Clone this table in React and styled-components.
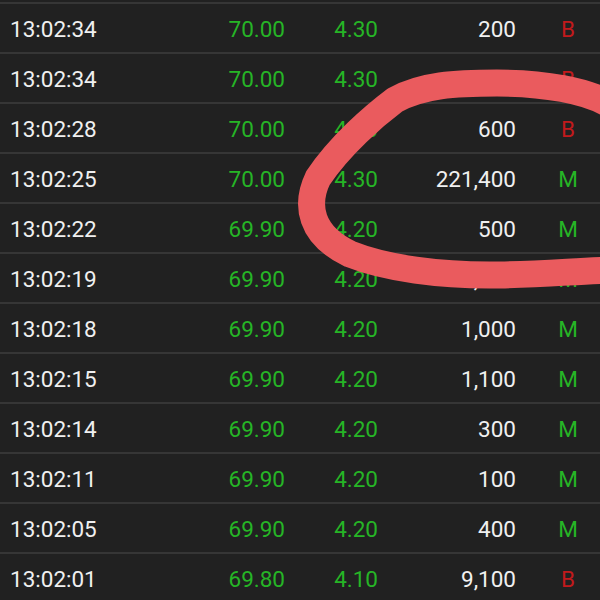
import styled, { createGlobalStyle } from "styled-components";

const GlobalStyle = createGlobalStyle`
  html, body {
    margin: 0;
    padding: 0;
    background: #212121;
    overflow: hidden;
  }
`;

const Screen = styled.div`
  position: relative;
  width: 600px;
  height: 600px;
  padding-top: 2px;
  box-sizing: border-box;
  background: #212121;
  overflow: hidden;
  font-family: Roboto, "Noto Sans", sans-serif;
`;

const Row = styled.div`
  display: grid;
  grid-template-columns: 190px 85px 93px 138px 84px;
  align-items: center;
  height: 46px;
  padding: 2px 0 0 10px;
  border-top: 2px solid #363636;
  font-size: 22.5px;
  line-height: 46px;
  white-space: nowrap;
`;

const Time = styled.span`
  color: #f0f0f0;
`;

const Num = styled.span`
  color: ${(p) => p.color || "#f0f0f0"};
  text-align: right;
`;

const Side = styled.span`
  color: ${(p) => (p.side === "B" ? "#c21a1c" : "#26b526")};
  text-align: center;
  padding-left: 20px;
`;

const Scribble = styled.svg`
  position: absolute;
  left: 0;
  top: 0;
  pointer-events: none;
`;

const GREEN = "#26b526";

const trades = [
  ["13:02:34", "70.00", "4.30", "200", "B"],
  ["13:02:34", "70.00", "4.30", "100", "B"],
  ["13:02:28", "70.00", "4.30", "600", "B"],
  ["13:02:25", "70.00", "4.30", "221,400", "M"],
  ["13:02:22", "69.90", "4.20", "500", "M"],
  ["13:02:19", "69.90", "4.20", "1,000", "M"],
  ["13:02:18", "69.90", "4.20", "1,000", "M"],
  ["13:02:15", "69.90", "4.20", "1,100", "M"],
  ["13:02:14", "69.90", "4.20", "300", "M"],
  ["13:02:11", "69.90", "4.20", "100", "M"],
  ["13:02:05", "69.90", "4.20", "400", "M"],
  ["13:02:01", "69.80", "4.10", "9,100", "B"],
];

export default function App() {
  return (
    <>
      <GlobalStyle />
      <Screen>
        {trades.map(([time, price, change, vol, side], i) => (
          <Row key={i}>
            <Time>{time}</Time>
            <Num color={GREEN}>{price}</Num>
            <Num color={GREEN}>{change}</Num>
            <Num>{vol}</Num>
            <Side side={side}>{side}</Side>
          </Row>
        ))}
        {/* hand-drawn highlight over the table */}
        <Scribble width="600" height="600" viewBox="0 0 600 600">
          <path
            d="M 612 106 C 588 90, 542 83, 497 83 C 455 83, 422 85, 395 100 C 375 115, 340 145, 318 178 C 305 205, 310 235, 350 254 C 385 268, 440 276, 500 275 C 545 274, 578 271, 612 270"
            fill="none"
            stroke="#ea5b5e"
            strokeWidth="27"
            strokeLinecap="round"
            strokeLinejoin="round"
          />
        </Scribble>
      </Screen>
    </>
  );
}
